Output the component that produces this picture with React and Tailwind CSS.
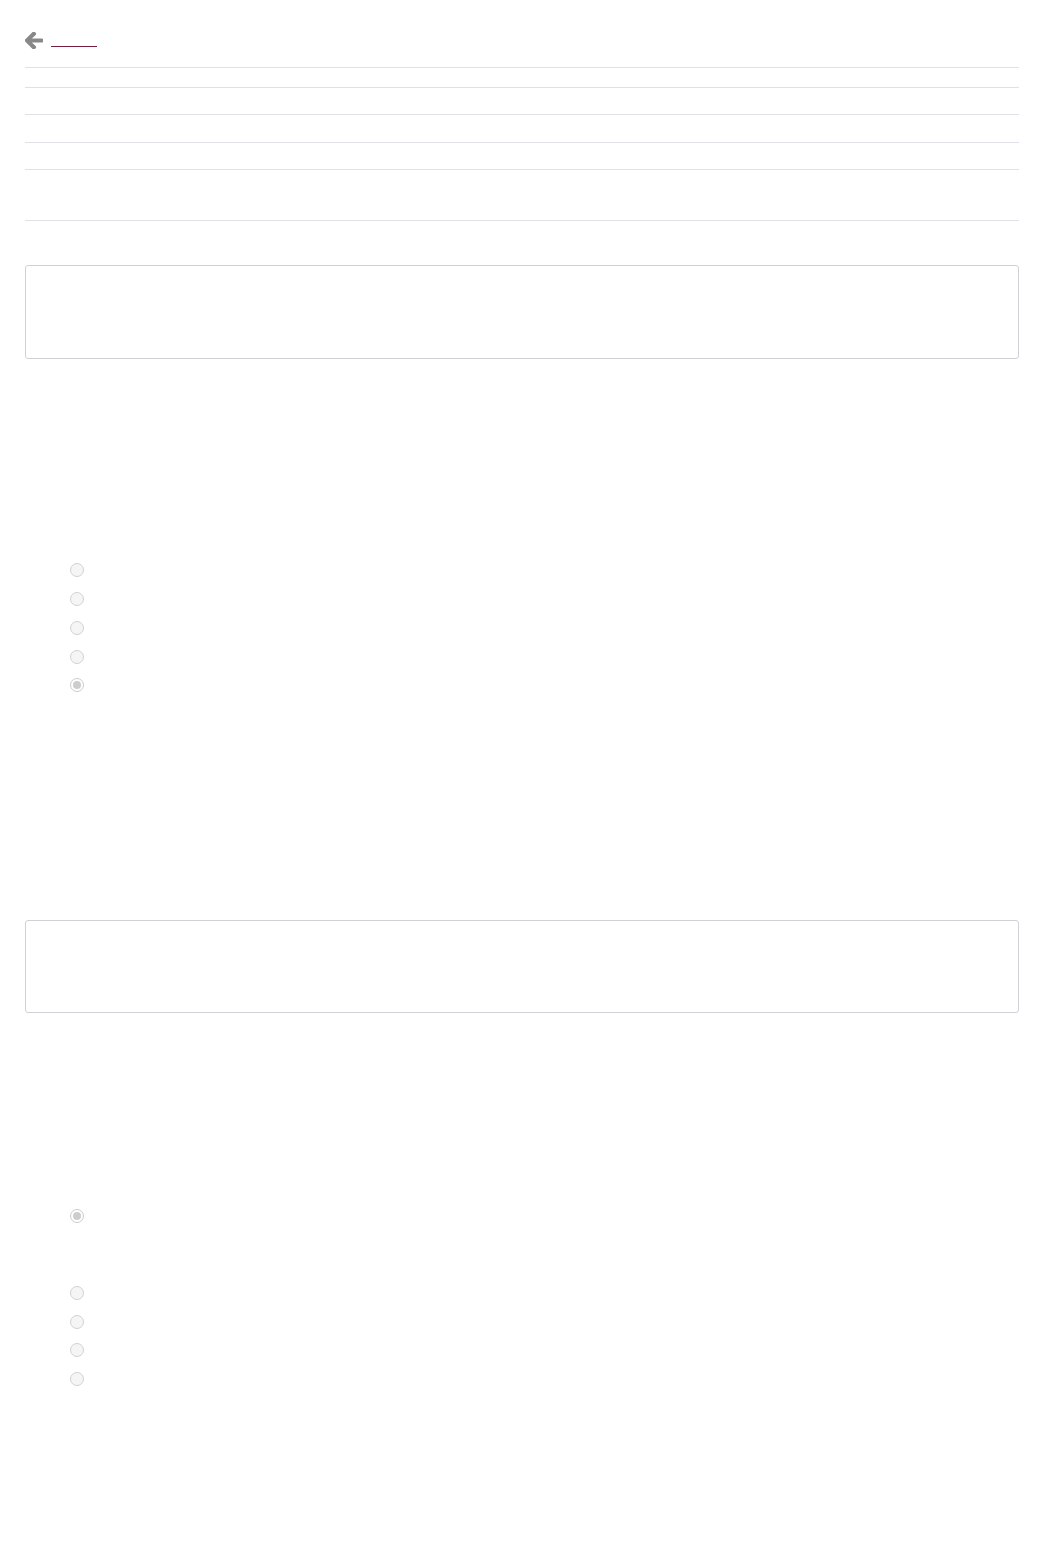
import React from "react";

function Radio({ checked }) {
  return (
    <label className="h-[28.75px] flex items-center">
      <input type="radio" disabled defaultChecked={checked} className="sr-only" />
      {checked ? (
        <span className="ml-[45px] w-[14px] h-[14px] rounded-full border border-[#cccccc] bg-white flex items-center justify-center">
          <span className="w-[8px] h-[8px] rounded-full bg-[#cdcdcd]"></span>
        </span>
      ) : (
        <span className="ml-[45px] w-[14px] h-[14px] rounded-full border border-[#d2d2d2] bg-[#f5f5f5]"></span>
      )}
    </label>
  );
}

export default function App() {
  return (
    <div className="min-h-[1557px] bg-white px-[25px]" style={{ fontFamily: '"Liberation Sans", Arial, sans-serif' }}>
      <div className="h-[67px] pt-[32px] flex items-start">
        <svg viewBox="0 37 448 438" width="18" height="17" className="text-[#888888]" fill="currentColor" stroke="currentColor" strokeWidth="28" strokeLinejoin="round">
          <path d="M257.5 445.1l-22.2 22.2c-9.4 9.4-24.6 9.4-33.9 0L7 273c-9.4-9.4-9.4-24.6 0-33.9L201.4 44.7c9.4-9.4 24.6-9.4 33.9 0l22.2 22.2c9.5 9.5 9.3 25-.4 34.3L136.6 216H424c13.3 0 24 10.7 24 24v32c0 13.3-10.7 24-24 24H136.6l120.5 114.8c10.8 9.3 11 24.8.4 34.3z" />
        </svg>
        <a href="#" className="ml-[8px] mt-[14px] block w-[46px] h-px bg-[#7b1c3c]"></a>
      </div>
      <div className="border-t border-[#e0e0e6] h-[20px]"></div>
      <div className="border-t border-[#e0e0e6] h-[27px]"></div>
      <div className="border-t border-[#e0e0e6] h-[28px]"></div>
      <div className="border-t border-[#e0e0e6] h-[27px]"></div>
      <div className="border-t border-[#e0e0e6] h-[51px]"></div>
      <div className="border-t border-[#e0e0e6] h-px"></div>

      <div className="mt-[44px] h-[94px] border border-[#cfd1d8] rounded-[3px]"></div>

      <div className="mt-[197px]">
        <Radio />
        <Radio />
        <Radio />
        <Radio />
        <Radio checked />
      </div>

      <div className="mt-[220px] h-[93px] border border-[#cfd1d8] rounded-[3px]"></div>

      <div className="mt-[189px]">
        <Radio checked />
      </div>
      <div className="mt-[48px]">
        <Radio />
        <Radio />
        <Radio />
        <Radio />
      </div>
    </div>
  );
}
